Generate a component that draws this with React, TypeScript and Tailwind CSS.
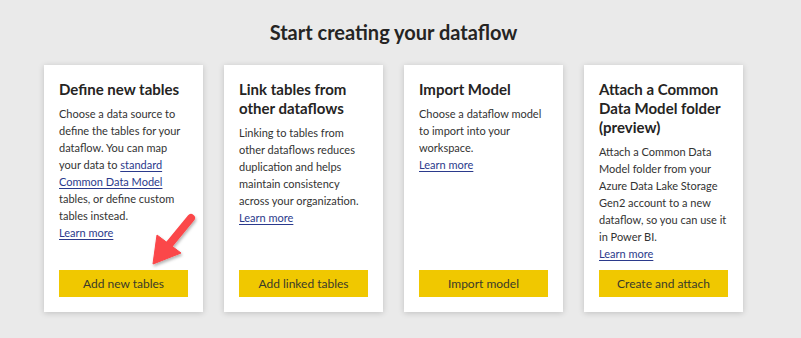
import React from "react";

const font = { fontFamily: 'Lato, "Noto Sans", sans-serif' };

type Card = {
  title: string[];
  body: React.ReactNode[];
  button: string;
};

const Link = ({ children }: { children: React.ReactNode }) => (
  <span className="text-[#2b3a8c] underline underline-offset-2">{children}</span>
);

const cards: Card[] = [
  {
    title: ["Define new tables"],
    body: [
      "Choose a data source to",
      "define the tables for your",
      "dataflow. You can map",
      <>your data to <Link>standard</Link></>,
      <Link>Common Data Model</Link>,
      "tables, or define custom",
      "tables instead.",
      <Link>Learn more</Link>,
    ],
    button: "Add new tables",
  },
  {
    title: ["Link tables from", "other dataflows"],
    body: [
      "Linking to tables from",
      "other dataflows reduces",
      "duplication and helps",
      "maintain consistency",
      "across your organization.",
      <Link>Learn more</Link>,
    ],
    button: "Add linked tables",
  },
  {
    title: ["Import Model"],
    body: [
      "Choose a dataflow model",
      "to import into your",
      "workspace.",
      <Link>Learn more</Link>,
    ],
    button: "Import model",
  },
  {
    title: ["Attach a Common", "Data Model folder", "(preview)"],
    body: [
      "Attach a Common Data",
      "Model folder from your",
      "Azure Data Lake Storage",
      "Gen2 account to a new",
      "dataflow, so you can use it",
      "in Power BI.",
      <Link>Learn more</Link>,
    ],
    button: "Create and attach",
  },
];

export default function App() {
  return (
    <div
      className="relative w-[801px] h-[338px] bg-[#eaeaea] text-[#252423] overflow-hidden"
      style={font}
    >
      <div className="ml-[44px] w-[699px]">
        <h1 className="pt-[20px] text-center text-[20px] leading-[24px] font-bold text-[#252423]">
          Start creating your dataflow
        </h1>
        <div className="mt-[21px] flex gap-[21px]">
          {cards.map((c, i) => (
            <div
              key={i}
              className="w-[159px] h-[247px] bg-white shadow-[0_1px_6px_rgba(0,0,0,0.18)] px-[15px] pt-[15px] pb-[15px] flex flex-col"
            >
              <div className="text-[15px] leading-[19px] font-bold text-[#252423]">
                {c.title.map((t, j) => (
                  <div key={j} className="whitespace-nowrap">{t}</div>
                ))}
              </div>
              <div className="mt-[6px] text-[11px] leading-[17px] text-[#333]">
                {c.body.map((t, j) => (
                  <div key={j} className="whitespace-nowrap">{t}</div>
                ))}
              </div>
              <div className="flex-1" />
              <button className="w-[129px] h-[27px] bg-[#f0c800] text-[12px] text-[#3a3a2a] flex items-center justify-center">
                {c.button}
              </button>
            </div>
          ))}
        </div>
      </div>
      <svg
        className="absolute left-[140px] top-[205px]"
        width="66"
        height="70"
        viewBox="140 205 66 70"
      >
        <defs>
          <filter id="sh" x="-30%" y="-30%" width="160%" height="160%">
            <feDropShadow dx="1" dy="2" stdDeviation="1.5" floodColor="#000" floodOpacity="0.3" />
          </filter>
        </defs>
        <g filter="url(#sh)" fill="#fb4649" stroke="#fb4649">
          <line x1="191" y1="218" x2="168" y2="246" strokeWidth="8" strokeLinecap="round" />
          <polygon points="153,264 157,235 181,253" strokeWidth="1" strokeLinejoin="round" />
        </g>
      </svg>
    </div>
  );
}
